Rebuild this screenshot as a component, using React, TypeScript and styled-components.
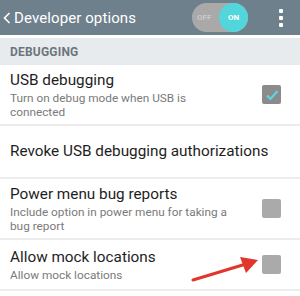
import styled, { createGlobalStyle } from 'styled-components';

const GlobalStyle = createGlobalStyle`
    html, body {
        margin: 0;
        padding: 0;
        background: #ffffff;
    }

    body {
        font-family: Roboto, "Noto Sans", sans-serif;
        -webkit-font-smoothing: antialiased;
    }
`;

const Screen = styled.div`
    width: 300px;
    height: 296px;
    overflow: hidden;
    background: #ffffff;
    display: flex;
    flex-direction: column;
`;

const ActionBar = styled.header`
    height: 35px;
    flex-shrink: 0;
    background: #6f808d;
    display: flex;
    align-items: center;
    padding: 0 0 0 3px;
    color: #ffffff;
`;

const BackIcon = styled.svg`
    width: 8px;
    height: 12px;
    flex-shrink: 0;
`;

const Title = styled.h1`
    margin: 0 0 0 3px;
    font-size: 15px;
    font-weight: 400;
    letter-spacing: 0.1px;
    flex: 1;
    line-height: 20px;
    padding-top: 1px;
`;

const MasterSwitch = styled.div`
    width: 56px;
    height: 29px;
    border-radius: 15px;
    background: #a9a9a9;
    display: flex;
    align-items: center;
    justify-content: space-between;
    padding-left: 5px;
    box-sizing: border-box;
    margin-right: 31px;
`;

const SwitchLabel = styled.span<{ $on?: boolean }>`
    font-size: 8px;
    font-weight: 700;
    color: ${p => (p.$on ? '#ffffff' : '#c9c9c9')};
`;

const Knob = styled.div`
    width: 29px;
    height: 29px;
    border-radius: 50%;
    background: #52d6dc;
    display: flex;
    align-items: center;
    justify-content: center;
`;

const Overflow = styled.div`
    display: flex;
    flex-direction: column;
    gap: 3px;
    margin-right: 17px;
`;

const Dot = styled.span`
    width: 4px;
    height: 4px;
    background: #ffffff;
    border-radius: 1px;
`;

const SectionHeader = styled.div`
    margin-top: 3px;
    height: 27px;
    flex-shrink: 0;
    background: #e8ebed;
    display: flex;
    align-items: center;
    padding-left: 10px;
    font-size: 12px;
    font-weight: 700;
    color: #6c757b;
    letter-spacing: 0.2px;
`;

const Row = styled.div<{ $pad: number }>`
    position: relative;
    display: flex;
    align-items: center;
    padding: ${p => p.$pad}px 19px ${p => p.$pad}px 10px;
    border-bottom: 2px solid #ececec;
    flex-shrink: 0;
`;

const RowText = styled.div`
    flex: 1;
    display: flex;
    flex-direction: column;
`;

const RowTitle = styled.div`
    font-size: 15.3px;
    line-height: 21px;
    color: #1e1e1e;
`;

const RowSummary = styled.div`
    font-size: 11.8px;
    line-height: 14px;
    color: #7a7a7a;
    max-width: 230px;
`;

const Box = styled.div<{ $checked?: boolean }>`
    width: 19px;
    height: 19px;
    border-radius: 2px;
    background: ${p => (p.$checked ? '#8b8b8b' : '#aaaaaa')};
    display: flex;
    align-items: center;
    justify-content: center;
    flex-shrink: 0;
`;

const Arrow = styled.svg`
    position: absolute;
    left: 190px;
    top: 14px;
    width: 72px;
    height: 28px;
`;

export default function App() {
    return (
        <>
            <GlobalStyle />
            <Screen>
                <ActionBar>
                    <BackIcon viewBox="0 0 8 12">
                        <polyline points="6.5,1 1.5,6 6.5,11" fill="none" stroke="#ffffff" strokeWidth="1.6" />
                    </BackIcon>
                    <Title>Developer options</Title>
                    <MasterSwitch>
                        <SwitchLabel>OFF</SwitchLabel>
                        <Knob>
                            <SwitchLabel $on>ON</SwitchLabel>
                        </Knob>
                    </MasterSwitch>
                    <Overflow>
                        <Dot />
                        <Dot />
                        <Dot />
                    </Overflow>
                </ActionBar>

                <SectionHeader>DEBUGGING</SectionHeader>

                <Row $pad={5}>
                    <RowText>
                        <RowTitle>USB debugging</RowTitle>
                        <RowSummary>Turn on debug mode when USB is connected</RowSummary>
                    </RowText>
                    <Box $checked>
                        <svg width="14" height="12" viewBox="0 0 14 12">
                            <polyline points="2,6.5 5.5,10 12.5,2" fill="none" stroke="#58d8e2" strokeWidth="2.2" />
                        </svg>
                    </Box>
                </Row>

                <Row $pad={15}>
                    <RowText>
                        <RowTitle>Revoke USB debugging authorizations</RowTitle>
                    </RowText>
                </Row>

                <Row $pad={5}>
                    <RowText>
                        <RowTitle>Power menu bug reports</RowTitle>
                        <RowSummary>Include option in power menu for taking a bug report</RowSummary>
                    </RowText>
                    <Box />
                </Row>

                <Row $pad={7}>
                    <RowText>
                        <RowTitle>Allow mock locations</RowTitle>
                        <RowSummary>Allow mock locations</RowSummary>
                    </RowText>
                    <Box />
                    <Arrow viewBox="0 0 72 28">
                        <line x1="3" y1="26" x2="56" y2="10" stroke="#e2352c" strokeWidth="3" strokeLinecap="round" />
                        <polygon points="68,6 50,3 56,19" fill="#e2352c" />
                    </Arrow>
                </Row>
            </Screen>
        </>
    );
}
